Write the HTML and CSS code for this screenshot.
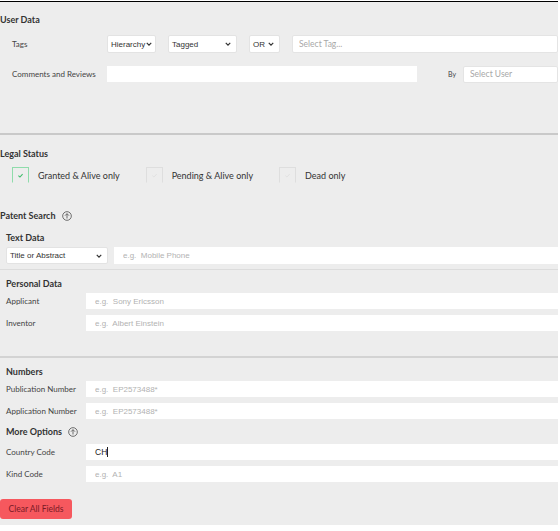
FILE: index.html
```html
<!DOCTYPE html>
<html>
<head>
<meta charset="utf-8">
<link rel="stylesheet" href="styles.css">
</head>
<body>
<div class="page">
  <section class="user-data">
    <h2 class="head">User Data</h2>
    <div class="ud-row tags-row">
      <span class="ud-label">Tags</span>
      <div class="sel sel-hier"><span class="sel-text">Hierarchy</span><svg class="chev" viewBox="0 0 8 5" width="6" height="4"><path d="M1 1 L4 4 L7 1" fill="none" stroke="#333" stroke-width="1.6"/></svg></div>
      <div class="sel sel-tagged"><span class="sel-text">Tagged</span><svg class="chev" viewBox="0 0 8 5" width="6" height="4"><path d="M1 1 L4 4 L7 1" fill="none" stroke="#333" stroke-width="1.6"/></svg></div>
      <div class="sel sel-or"><span class="sel-text">OR</span><svg class="chev" viewBox="0 0 8 5" width="6" height="4"><path d="M1 1 L4 4 L7 1" fill="none" stroke="#333" stroke-width="1.6"/></svg></div>
      <input class="field tag-field" placeholder="Select Tag...">
    </div>
    <div class="ud-row comments-row">
      <span class="ud-label">Comments and Reviews</span>
      <input class="field comments-field">
      <span class="by">By</span>
      <input class="field tag-field user-field" placeholder="Select User">
    </div>
  </section>

  <section class="lower">
    <h2 class="head">Legal Status</h2>
    <div class="checks">
      <label class="check on"><span class="box"><svg viewBox="0 0 10 10" width="7" height="7"><path d="M2 5.2 L4.2 7.2 L8 3" fill="none" stroke="#3dbb6a" stroke-width="1.5"/></svg></span>Granted &amp; Alive only</label>
      <label class="check"><span class="box"><svg viewBox="0 0 10 10" width="7" height="7"><path d="M2 5.2 L4.2 7.2 L8 3" fill="none" stroke="#e0e0e0" stroke-width="1.4"/></svg></span>Pending &amp; Alive only</label>
      <label class="check"><span class="box"><svg viewBox="0 0 10 10" width="7" height="7"><path d="M2 5.2 L4.2 7.2 L8 3" fill="none" stroke="#e0e0e0" stroke-width="1.4"/></svg></span>Dead only</label>
    </div>

    <h2 class="head toggle patent">Patent Search <svg class="up" viewBox="0 0 12 12" width="10" height="10"><circle cx="6" cy="6" r="5.2" fill="none" stroke="#555" stroke-width="1"/><path d="M6 9 V3.3 M3.6 5.6 L6 3.2 L8.4 5.6" fill="none" stroke="#555" stroke-width="1"/></svg></h2>

    <h3 class="sub text-data">Text Data</h3>
    <div class="text-row">
      <div class="sel sel-title"><span class="sel-text">Title or Abstract</span><svg class="chev" viewBox="0 0 8 5" width="6" height="4"><path d="M1 1 L4 4 L7 1" fill="none" stroke="#333" stroke-width="1.6"/></svg></div>
      <input class="field text-field" placeholder="e.g.  Mobile Phone">
    </div>
    <hr class="thin">

    <h3 class="sub personal">Personal Data</h3>
    <div class="frow first"><span class="flabel">Applicant</span><input class="field" placeholder="e.g.  Sony Ericsson"></div>
    <div class="frow"><span class="flabel">Inventor</span><input class="field" placeholder="e.g.  Albert Einstein"></div>
    <hr class="thick">

    <h3 class="sub numbers">Numbers</h3>
    <div class="frow first"><span class="flabel">Publication Number</span><input class="field" placeholder="e.g.  EP2573488*"></div>
    <div class="frow"><span class="flabel">Application Number</span><input class="field" placeholder="e.g.  EP2573488*"></div>

    <h3 class="sub toggle more">More Options <svg class="up" viewBox="0 0 12 12" width="10" height="10"><circle cx="6" cy="6" r="5.2" fill="none" stroke="#555" stroke-width="1"/><path d="M6 9 V3.3 M3.6 5.6 L6 3.2 L8.4 5.6" fill="none" stroke="#555" stroke-width="1"/></svg></h3>
    <div class="frow country"><span class="flabel">Country Code</span><div class="field value">CH<span class="caret"></span></div></div>
    <div class="frow"><span class="flabel">Kind Code</span><input class="field" placeholder="e.g.  A1"></div>

    <button class="clear">Clear All Fields</button>
  </section>
</div>
</body>
</html>
```

FILE: styles.css
```css
html, body {
  margin: 0;
  padding: 0;
  background: #fff;
}
body {
  padding-top: 1px;
  font-family: Lato, "Open Sans", sans-serif;
  color: #333;
}
.page {
  width: 558px;
  background: #ededed;
  border-top: 1px solid #000;
  overflow: hidden;
  padding-bottom: 6px;
}
.head {
  margin: 0;
  font-size: 9px;
  line-height: 11px;
  font-weight: 700;
  color: #333;
}
.sub {
  margin: 0 0 0 6px;
  font-size: 9px;
  line-height: 11px;
  font-weight: 700;
  color: #333;
}

/* user data */
.user-data {
  padding-top: 12px;
  padding-bottom: 51px;
  border-bottom: 2px solid #c9c9c9;
}
.ud-row {
  display: flex;
  align-items: center;
  padding-left: 12px;
}
.tags-row {
  margin-top: 10px;
  height: 18px;
}
.comments-row {
  margin-top: 13px;
  height: 16px;
}
.ud-label {
  width: 95px;
  flex: none;
  font-size: 8px;
  color: #444;
}
.sel {
  box-sizing: border-box;
  height: 18px;
  background: #fff;
  border: 1px solid #e3e3e3;
  border-radius: 2px;
  display: flex;
  align-items: center;
  justify-content: space-between;
  padding: 0 5px 0 3px;
  flex: none;
  font-family: "Liberation Sans", Arial, sans-serif;
  font-size: 8px;
  color: #333;
}
.sel-hier { width: 49px; padding-right: 3px; }
.sel-tagged { width: 69px; margin-left: 12px; }
.sel-or { width: 31px; margin-left: 12px; }
.sel-title { width: 102px; height: 17px; }
.chev { flex: none; }

.field {
  box-sizing: border-box;
  display: block;
  height: 16px;
  border: none;
  background: #fff;
  margin: 0;
  padding: 0 0 0 9px;
  font-family: "Liberation Sans", Arial, sans-serif;
  font-size: 8px;
  color: #222;
  outline: none;
  flex: 1 1 auto;
  min-width: 0;
}
.field::placeholder {
  color: #b2b2b2;
}
.tag-field {
  height: 18px;
  margin-left: 12px;
  border: 1px solid #e4e4e4;
  border-radius: 2px;
  padding-left: 6px;
  font-family: Lato, sans-serif;
  font-size: 8.5px;
}
.tag-field::placeholder { color: #a8a8a8; }
.comments-field {
  flex: none;
  width: 310px;
  height: 16px;
}
.by {
  margin-left: 31px;
  width: 15px;
  flex: none;
  font-size: 7px;
  color: #444;
}
.user-field {
  margin-left: 0;
  height: 17px;
  flex: none;
  width: 95px;
}

/* lower */
.lower {
  padding-top: 13px;
}
.checks {
  display: flex;
  margin-top: 8px;
  padding-left: 12px;
  height: 16px;
  align-items: center;
}
.check {
  display: flex;
  align-items: center;
  font-size: 9px;
  color: #333;
  margin-right: 26px;
}
.box {
  box-sizing: border-box;
  width: 17px;
  height: 16px;
  border: 1px solid #dedede;
  border-bottom-color: transparent;
  display: flex;
  align-items: center;
  justify-content: center;
  margin-right: 9px;
}
.check.on .box {
  border-color: #8fdcab;
  border-bottom-color: transparent;
}
.toggle {
  display: flex;
  align-items: center;
}
.up { margin-left: 6px; }
.patent { margin-top: 27px; }
.text-data { margin-top: 11px; }
.text-row {
  display: flex;
  align-items: center;
  margin-top: 4px;
  padding-left: 6px;
  height: 17px;
}
.text-field {
  margin-left: 6px;
  height: 17px;
}
hr {
  border: none;
  margin: 0;
}
.thin {
  margin-top: 5px;
  height: 1px;
  background: #dcdcdc;
}
.thick {
  margin-top: 25px;
  height: 2px;
  background: #d3d3d3;
}
.personal { margin-top: 8px; }
.numbers { margin-top: 8px; }
.frow {
  display: flex;
  align-items: center;
  height: 16px;
  margin-top: 6px;
  padding-left: 6px;
}
.frow.first { margin-top: 4px; }
.flabel {
  width: 80px;
  flex: none;
  font-size: 8px;
  color: #444;
}
.more { margin-top: 7px; }
.country { margin-top: 7px; }
.value {
  display: flex;
  align-items: center;
  font-size: 8.5px;
  color: #222;
}
.caret {
  display: inline-block;
  width: 1px;
  height: 10px;
  background: #222;
  margin-left: 0;
}
.clear {
  display: block;
  margin-top: 17px;
  height: 20px;
  width: 72px;
  padding: 0;
  border: none;
  border-radius: 3px;
  background: #f6585e;
  color: #7a1a26;
  font-family: Lato, sans-serif;
  font-size: 8.5px;
  font-weight: 400;
}
```
